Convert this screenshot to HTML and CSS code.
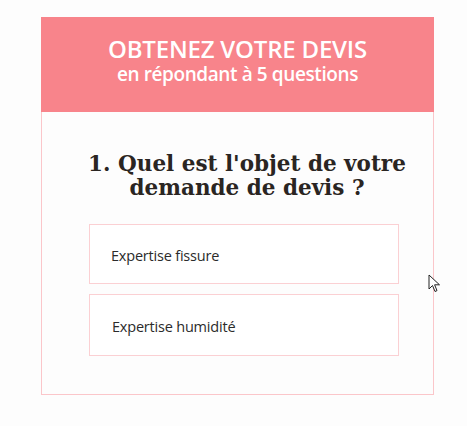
FILE: index.html
```html
<!DOCTYPE html>
<html lang="fr">
<head>
<meta charset="utf-8">
<link rel="stylesheet" href="styles.css">
</head>
<body>
<div class="page">
  <div class="card">
    <div class="header">
      <div class="title">OBTENEZ VOTRE DEVIS</div>
      <div class="subtitle">en répondant à 5 questions</div>
    </div>
    <div class="body">
      <h2 class="question">1. Quel est l'objet de votre demande de devis ?</h2>
      <div class="options">
        <div class="option">Expertise fissure</div>
        <div class="option">Expertise humidité</div>
      </div>
    </div>
  </div>
  <svg class="cursor" width="14" height="20" viewBox="0 0 14 20">
    <path d="M1 1 L1 15 L4.5 11.5 L7 17.5 L9 16.6 L6.6 10.8 L11.5 10.8 Z" fill="#fff" stroke="#222" stroke-width="1" stroke-linejoin="miter"/>
  </svg>
</div>
</body>
</html>
```
FILE: styles.css
```css
html, body {
  margin: 0;
  padding: 0;
  background: #fdfdfd;
}
.page {
  position: relative;
  width: 467px;
  height: 426px;
  padding: 17px 0 0 41px;
  box-sizing: border-box;
}
.card {
  width: 393px;
  height: 378px;
  box-sizing: border-box;
  border: 1px solid #fbc6ca;
  border-top: none;
  background: #fdfdfd;
}
.header {
  background: #f8848b;
  margin: 0 -1px;
  height: 95px;
  box-sizing: border-box;
  padding-top: 18px;
  text-align: center;
  color: #fff;
  font-family: "Open Sans", "Noto Sans", sans-serif;
}
.title {
  font-size: 24px;
  line-height: 28px;
  font-weight: 600;
  letter-spacing: -0.2px;
}
.subtitle {
  font-size: 19px;
  line-height: 23px;
  font-weight: 600;
  letter-spacing: -0.4px;
}
.body {
  padding: 0 34px 0 47px;
}
.question {
  margin: 40px -10px 0 -4px;
  font-family: "DejaVu Serif", Georgia, serif;
  font-weight: bold;
  font-size: 21.5px;
  line-height: 24px;
  color: #2a2522;
  text-align: center;
  letter-spacing: 0;
}
.options {
  margin-top: 24px;
  display: flex;
  flex-direction: column;
  gap: 10px;
}
.option {
  border: 1px solid #fbd0d3;
  background: #fff;
  font-family: "Open Sans", "Noto Sans", sans-serif;
  font-size: 14.5px;
  color: #2b2b2b;
  padding: 3px 21px 0;
  height: 60px;
  box-sizing: border-box;
  display: flex;
  align-items: center;
  letter-spacing: -0.2px;
}
.option + .option {
  height: 62px;
  padding-left: 22px;
}
.cursor {
  position: absolute;
  left: 428px;
  top: 274px;
}
```
